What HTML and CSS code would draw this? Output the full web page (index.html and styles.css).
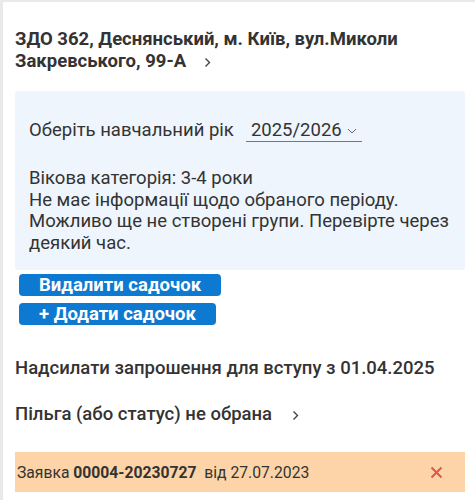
FILE: index.html
```html
<!DOCTYPE html>
<html lang="uk">
<head>
    <meta charset="UTF-8">
    <meta name="viewport" content="width=device-width, initial-scale=1.0">
    <title>Заявка</title>
    <link rel="stylesheet" href="styles.css">
</head>
<body>
    <div class="page">
        <div class="card">
            <a class="kinder-title" href="#">
                ЗДО 362, Деснянський, м. Київ, вул.Миколи Закревського, 99-А<svg class="chevron" width="7" height="11" viewBox="0 0 7 11">
                    <path d="M1.5 1.5l4 4-4 4" fill="none" stroke="#444" stroke-width="1.4"/>
                </svg>
            </a>

            <div class="info-panel">
                <div class="year-row">
                    <span class="year-label">Оберіть навчальний рік</span>
                    <span class="year-select">
                        2025/2026
                        <svg class="select-arrow" width="10" height="6" viewBox="0 0 10 6">
                            <path d="M1 1l4 4 4-4" fill="none" stroke="#666" stroke-width="1"/>
                        </svg>
                    </span>
                </div>
                <p class="info-text">
                    Вікова категорія: 3-4 роки<br>
                    Не має інформації щодо обраного періоду. Можливо ще не створені групи. Перевірте через деякий час.
                </p>
            </div>

            <div class="buttons">
                <button class="btn">Видалити садочок</button>
                <button class="btn">+ Додати садочок</button>
            </div>

            <p class="notice">Надсилати запрошення для вступу з 01.04.2025</p>

            <a class="benefit" href="#">
                Пільга (або статус) не обрана<svg class="chevron" width="7" height="11" viewBox="0 0 7 11">
                    <path d="M1.5 1.5l4 4-4 4" fill="none" stroke="#444" stroke-width="1.4"/>
                </svg>
            </a>

            <div class="request-bar">
                <span class="request-text">Заявка <b>00004-20230727</b>&nbsp; від 27.07.2023</span>
                <svg class="close-icon" width="13" height="13" viewBox="0 0 13 13">
                    <path d="M1.5 1.5l10 10M11.5 1.5l-10 10" stroke="#e0564b" stroke-width="2"/>
                </svg>
            </div>
        </div>
    </div>
</body>
</html>
```

FILE: styles.css
```css
* {
    margin: 0;
    padding: 0;
    box-sizing: border-box;
}

body {
    font-family: Roboto, 'Noto Sans', sans-serif;
    background: #e9e9e9;
    color: #333;
}

.page {
    padding: 2px 0 0 3px;
}

.card {
    background: #fff;
    min-height: 498px;
    padding: 26px 10px 8px 12px;
}

.kinder-title {
    display: block;
    font-size: 18.5px;
    font-weight: 700;
    line-height: 22px;
    color: #333;
    text-decoration: none;
    padding-right: 40px;
}

.chevron {
    margin-left: 18px;
    vertical-align: -1px;
}

.info-panel {
    margin-top: 19px;
    background: #eef5fd;
    border-radius: 3px;
    padding: 28px 14px 16px 14px;
}

.year-row {
    display: flex;
    align-items: baseline;
    font-size: 18.5px;
    line-height: 22px;
}

.year-select {
    margin-left: 12px;
    padding-left: 5px;
    width: 116px;
    border-bottom: 1px solid #777;
}

.select-arrow {
    margin-left: 1px;
    vertical-align: 2px;
}

.info-text {
    margin-top: 26px;
    font-size: 18.5px;
    line-height: 21.5px;
}

.buttons {
    padding-left: 4px;
    margin-top: 4px;
    display: flex;
    flex-direction: column;
    align-items: flex-start;
    gap: 7px;
}

.btn {
    font-family: Roboto, 'Noto Sans', sans-serif;
    font-size: 18.5px;
    font-weight: 700;
    line-height: 22px;
    padding: 0 20px;
    border: none;
    border-radius: 4px;
    background: #0d79d0;
    color: #fff;
}

.notice {
    margin-top: 31px;
    font-size: 18.5px;
    font-weight: 500;
    line-height: 24px;
}

.benefit {
    display: block;
    margin-top: 22px;
    font-size: 18.5px;
    font-weight: 500;
    line-height: 24px;
    color: #333;
    text-decoration: none;
}

.benefit .chevron {
    margin-left: 20px;
}

.request-bar {
    margin-top: 26px;
    height: 40px;
    background: #fdd4a7;
    display: flex;
    align-items: center;
    justify-content: space-between;
    padding: 0 22px 0 2px;
}

.request-text {
    font-size: 15.7px;
    color: #333;
}

.request-text b {
    font-weight: 700;
}
```
